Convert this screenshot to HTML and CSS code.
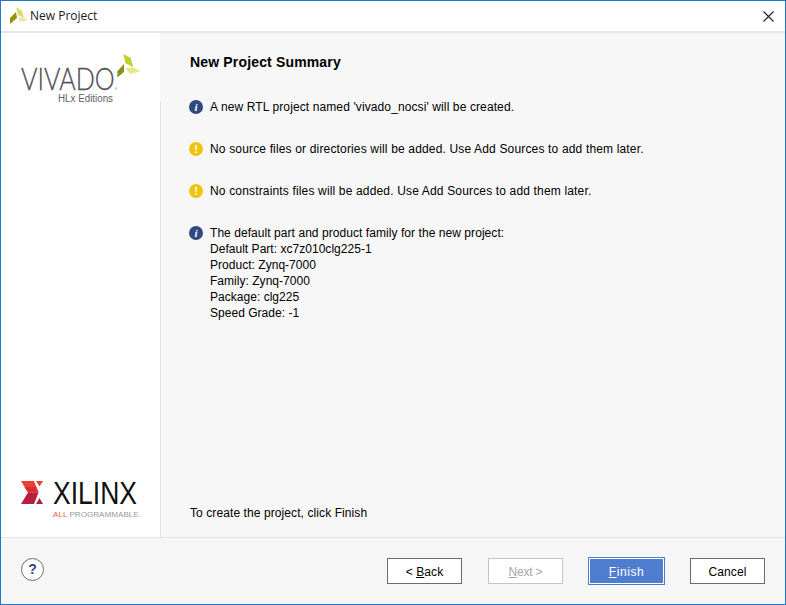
FILE: index.html
```html
<!DOCTYPE html>
<html lang="en">
<head>
    <meta charset="UTF-8">
    <title>New Project</title>
    <link rel="stylesheet" href="styles.css">
</head>
<body>
    <div class="window">
        <header class="titlebar">
            <svg class="app-icon" width="18" height="18" viewBox="0 0 18 18">
                <polygon points="7,0 13,4 15,11 9,8" fill="#d9de6a"/>
                <polygon points="9,10 15,11 19,13 11,15" fill="#e6ea9c"/>
                <polygon points="1,11 7,5 8,11 1,17" fill="#8f9412"/>
            </svg>
            <span class="title-text">New Project</span>
            <svg class="close-icon" width="11" height="11" viewBox="0 0 11 11">
                <path d="M0.5 0.5L10.5 10.5M10.5 0.5L0.5 10.5" stroke="#222" stroke-width="1.1" fill="none"/>
            </svg>
        </header>

        <div class="main">
            <aside class="sidebar">
                <svg class="vivado-logo" width="159" height="67" viewBox="1 33 159 67">
                    <text x="21" y="90" class="vivado-word" textLength="96" lengthAdjust="spacingAndGlyphs">VIVADO<tspan class="vivado-reg">®</tspan></text>
                    <text x="58" y="102" class="vivado-sub" textLength="55" lengthAdjust="spacingAndGlyphs">HLx Editions</text>
                    <polygon points="123.3,54 130.7,58 133.3,67.3 125.3,63" fill="#c5ce2f"/>
                    <polygon points="125.5,68 133.5,67.5 141,71 130,74" fill="#e4e985"/>
                    <polygon points="117.3,71.3 124,64 124,72 117.3,77.5" fill="#8c9112"/>
                </svg>
                <svg class="xilinx-logo" width="159" height="57" viewBox="1 480 159 57">
                    <polygon points="21,481 34,481 38.5,492.5 28,492.5" fill="#ee3f2d"/>
                    <polygon points="28,492.5 38.5,492.5 34,504 21,504" fill="#b71f3e"/>
                    <polygon points="24.5,487 36.3,487 38.5,492.5 28,492.5" fill="#d92b35"/>
                    <polygon points="36,481 43,481 39.5,486.5" fill="#ee3f2d"/>
                    <polygon points="39.5,498 43,504 36,504" fill="#b71f3e"/>
                    <text x="53" y="504" class="xilinx-word" textLength="84" lengthAdjust="spacingAndGlyphs">XILINX</text>
                    <text x="53" y="517" class="xilinx-tag" textLength="88" lengthAdjust="spacingAndGlyphs"><tspan fill="#ef5a4c">ALL</tspan> PROGRAMMABLE.</text>
                </svg>
            </aside>

            <section class="content">
                <h2 class="summary-title">New Project Summary</h2>
                <div class="messages">
                    <div class="message">
                        <span class="badge badge-info">i</span>
                        <p class="spaced">A new RTL project named 'vivado_nocsi' will be created.</p>
                    </div>
                    <div class="message">
                        <span class="badge badge-warn">!</span>
                        <p class="spaced-wide">No source files or directories will be added. Use Add Sources to add them later.</p>
                    </div>
                    <div class="message">
                        <span class="badge badge-warn">!</span>
                        <p class="spaced-wide">No constraints files will be added. Use Add Sources to add them later.</p>
                    </div>
                    <div class="message">
                        <span class="badge badge-info">i</span>
                        <p><span class="part-intro">The default part and product family for the new project:</span><br>
                        Default Part: xc7z010clg225-1<br>
                        Product: Zynq-7000<br>
                        Family: Zynq-7000<br>
                        Package: clg225<br>
                        Speed Grade: -1</p>
                    </div>
                </div>
                <p class="finish-hint">To create the project, click Finish</p>
            </section>
        </div>

        <footer class="footer">
            <span class="help-btn">?</span>
            <div class="buttons">
                <button class="btn">&lt; <u>B</u>ack</button>
                <button class="btn btn-disabled"><u>N</u>ext &gt;</button>
                <button class="btn btn-primary"><u>F</u>inish</button>
                <button class="btn">Cancel</button>
            </div>
        </footer>
    </div>
</body>
</html>
```

FILE: styles.css
```css
/* Global Styles */
* {
    box-sizing: border-box;
}

body {
    margin: 0;
    font-family: 'Liberation Sans', Arial, sans-serif;
    font-size: 12px;
    line-height: 16px;
    color: #000000;
}

.window {
    display: flex;
    flex-direction: column;
    width: 786px;
    height: 605px;
    border: 1px solid #1c79c9;
    background-color: #f7f7f7;
}

/* Title bar */
.titlebar {
    display: flex;
    align-items: center;
    height: 32px;
    padding: 0 11px 0 8px;
    background-color: #ffffff;
    border-bottom: 2px solid #e6e6e6;
}

.app-icon {
    overflow: visible;
}

.title-text {
    margin-left: 3px;
    flex: 1;
    font-family: 'Open Sans', sans-serif;
    font-size: 12px;
    color: #1a1a1a;
}

/* Main area */
.main {
    display: flex;
    flex: 1;
    min-height: 0;
}

.sidebar {
    display: flex;
    flex-direction: column;
    justify-content: space-between;
    width: 159px;
    margin-right: 1px;
    background-color: #ffffff;
    position: relative;
}

.sidebar::after {
    content: "";
    position: absolute;
    top: 68px;
    bottom: 0;
    right: -1px;
    width: 1px;
    background-color: #e2e2e2;
}

.sidebar svg {
    display: block;
    overflow: visible;
}

.vivado-word {
    font-family: 'Lato', sans-serif;
    font-weight: 300;
    font-size: 31px;
    fill: #505153;
    stroke: #505153;
    stroke-width: 0.3px;
}

.vivado-reg {
    font-family: 'Liberation Sans', sans-serif;
    font-size: 4px;
    stroke: none;
}

.vivado-sub {
    font-family: 'Liberation Sans', sans-serif;
    font-size: 10px;
    fill: #5f6062;
}

.xilinx-word {
    font-family: 'Liberation Sans', sans-serif;
    font-size: 32px;
    fill: #111111;
}

.xilinx-tag {
    font-family: 'Liberation Sans', sans-serif;
    font-size: 7.5px;
    fill: #96989b;
}

/* Summary */
.content {
    display: flex;
    flex-direction: column;
    flex: 1;
    padding: 20px 20px 16px 29px;
}

.summary-title {
    margin: 0 0 28px;
    font-size: 14px;
    line-height: 18px;
    font-weight: 700;
    letter-spacing: 0.16px;
}

.messages {
    display: flex;
    flex-direction: column;
    gap: 26px;
    flex: 1;
    margin-left: -1px;
}

.message {
    display: flex;
    gap: 7px;
}

.message p {
    margin: 0;
    letter-spacing: 0.03px;
}

.message .spaced {
    letter-spacing: 0.11px;
}

.message .spaced-wide {
    letter-spacing: 0.16px;
}

.part-intro {
    letter-spacing: 0.06px;
}

.badge {
    flex: none;
    width: 14px;
    height: 14px;
    margin-top: 1px;
    border-radius: 50%;
    text-align: center;
    font-size: 11px;
    line-height: 14px;
    font-weight: 700;
    color: #ffffff;
}

.badge-info {
    background-color: #30497f;
    font-family: 'Liberation Serif', serif;
    font-style: italic;
}

.badge-warn {
    background-color: #efc40f;
}

.finish-hint {
    margin: 0;
    letter-spacing: 0.09px;
}

/* Footer */
.footer {
    display: flex;
    align-items: center;
    justify-content: space-between;
    height: 67px;
    padding: 0 20px 1px 20px;
    border-top: 1px solid #e2e2e2;
    background-color: #f6f6f6;
}

.help-btn {
    width: 23px;
    height: 23px;
    margin-top: -2px;
    border: 1px solid #6d6d6d;
    border-radius: 50%;
    background-color: #ffffff;
    text-align: center;
    font-size: 14px;
    line-height: 21px;
    font-weight: 700;
    color: #30497f;
}

.buttons {
    display: flex;
    gap: 26px;
}

.btn {
    width: 75px;
    height: 26px;
    padding: 2px 0 0;
    border: 1px solid #6b6b6b;
    background-color: #ffffff;
    font-family: 'Liberation Sans', sans-serif;
    font-size: 12px;
    letter-spacing: 0.1px;
    color: #000000;
}

.btn-disabled {
    border-color: #c4c4c4;
    color: #a6a6a6;
    letter-spacing: -0.2px;
}

.btn-primary {
    border-color: #ffffff;
    background-color: #4f7dd0;
    box-shadow: 0 0 0 1px #4f7dd0;
    letter-spacing: 0.6px;
    color: #ffffff;
}
```
